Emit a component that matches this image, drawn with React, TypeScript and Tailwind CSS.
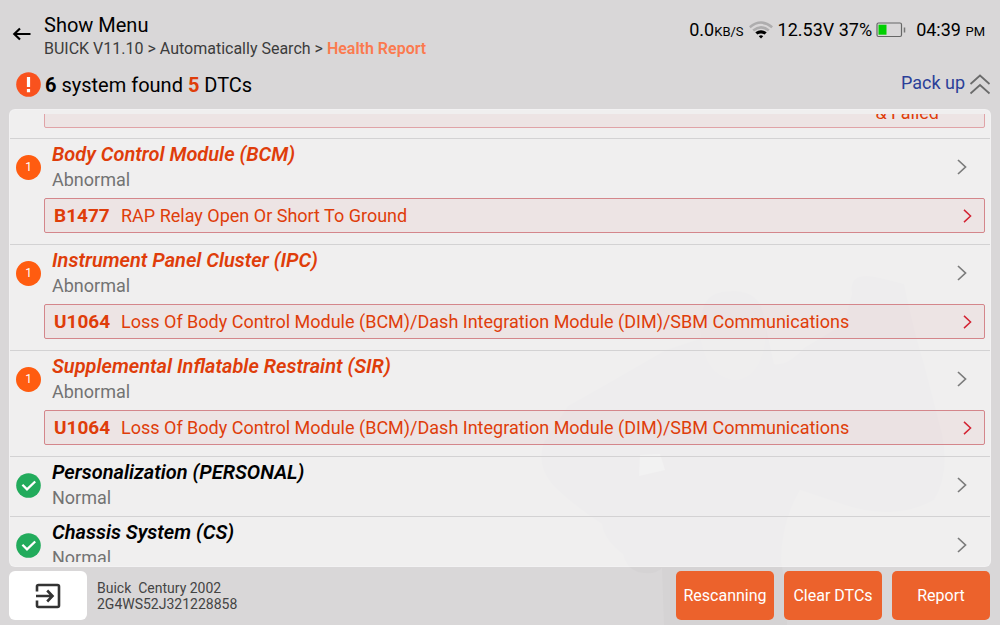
import clsx from "clsx";

type System = {
  name: string;
  dtcs: { code: string; text: string }[];
};

const systems: System[] = [
  {
    name: "Body Control Module (BCM)",
    dtcs: [{ code: "B1477", text: "RAP Relay Open Or Short To Ground" }],
  },
  {
    name: "Instrument Panel Cluster (IPC)",
    dtcs: [
      {
        code: "U1064",
        text: "Loss Of Body Control Module (BCM)/Dash Integration Module (DIM)/SBM Communications",
      },
    ],
  },
  {
    name: "Supplemental Inflatable Restraint (SIR)",
    dtcs: [
      {
        code: "U1064",
        text: "Loss Of Body Control Module (BCM)/Dash Integration Module (DIM)/SBM Communications",
      },
    ],
  },
  { name: "Personalization (PERSONAL)", dtcs: [] },
  { name: "Chassis System (CS)", dtcs: [] },
];

const actions = ["Rescanning", "Clear DTCs", "Report"];

function Chevron({ className }: { className?: string }) {
  return (
    <svg viewBox="0 0 10 16" fill="none" stroke="currentColor" className={clsx("shrink-0", className)}>
      <path d="M1 1l7.5 7L1 15" strokeWidth="1.7" />
    </svg>
  );
}

function WifiIcon() {
  return (
    <svg viewBox="0 0 24 18" fill="none" className="h-[18px] w-6">
      <path d="M.8 6.2Q12-3.2 23.2 6.2" stroke="#aeadae" strokeWidth="2.6" />
      <path d="M4.2 9.6Q12 3 19.8 9.6" stroke="#aeadae" strokeWidth="2.6" />
      <path d="M6.3 11.3Q12 7 17.7 11.3L15.7 13.6Q12 11.2 8.3 13.6z" fill="#000" />
      <path d="M9.8 15.2Q12 13.4 14.2 15.2L12 17.6z" fill="#000" />
    </svg>
  );
}

function BatteryIcon() {
  return (
    <svg viewBox="0 0 30 16" fill="none" className="h-4 w-[30px]">
      <rect x="1" y="1" width="24.5" height="13.5" rx="1.5" stroke="#666" strokeWidth="1.2" />
      <rect x="2.5" y="2.7" width="8" height="10" fill="#00d000" />
      <path d="M28.5 5.5v5" stroke="#777" strokeWidth="1.5" />
    </svg>
  );
}

function StatusIcon({ count }: { count: number }) {
  if (count > 0) {
    return (
      <span className="flex size-[25px] shrink-0 items-center justify-center rounded-full bg-[#ff5c10] text-xs text-white">
        {count}
      </span>
    );
  }
  return (
    <svg viewBox="0 0 25 25" fill="none" className="size-[25px] shrink-0">
      <circle cx="12.5" cy="12.5" r="12.3" fill="#22ab5c" />
      <path d="M6.4 11.7l4.6 4.6 8.2-7.8" stroke="#fff" strokeWidth="2.3" />
    </svg>
  );
}

function Backdrop() {
  return (
    <svg
      viewBox="0 0 1000 625"
      preserveAspectRatio="xMaxYMax slice"
      className="absolute inset-0 -z-10 size-full"
    >
      <path
        d="M664 625l-2-57q-8 8-24 4-12-4-15-18-19-14-21-30-33-22-50-40-16-20-8-42l24-36q18-10 46-26l52-30 36-12q-6-42 20-46 38-6 42 26l10 46q14 2 30-16l40-24 8-30q-4-24 28-16l24 6q10 48 20 80l18 70q8 40-8 66-40 22-92 4l-42-14q-18 30-19 70l6 40v81z"
        fill="#d5d3d4"
      />
      <path d="M640 455l20-1 5 16-26 6z" fill="#dfdedf" />
      <path d="M700 330q28-20 66-2-2 50-32 52-30-4-34-50z" fill="#d8d5d5" />
    </svg>
  );
}

function DtcRow({ code, text }: { code: string; text: string }) {
  return (
    <button className="flex h-[35px] w-full items-center rounded-xs border border-[#d4868b] bg-[#c81e2d]/5 px-[9px] text-left text-[#df3d0a]">
      <span className="flex min-w-0 flex-1 items-baseline text-lg">
        <span className="w-[67px] shrink-0 text-[19px] font-bold">{code}</span>
        <span className="truncate">{text}</span>
      </span>
      <Chevron className="mr-[3px] h-[14px] w-[9px] text-[#d32232]" />
    </button>
  );
}

function SystemRow({ system }: { system: System }) {
  const abnormal = system.dtcs.length > 0;
  return (
    <li className="shrink-0 border-t border-[#d3d2d3] pt-[3px]">
      <button className="flex w-full items-center pr-[23px] pl-[6px] text-left">
        <StatusIcon count={system.dtcs.length} />
        <span className="ml-[11px] flex-1 text-lg leading-[25px]">
          <span className={clsx("block text-xl leading-[25px] font-semibold italic", abnormal ? "text-[#df3d0a]" : "text-black")}>
            {system.name}
          </span>
          <span className="block text-[#737373]">{abnormal ? "Abnormal" : "Normal"}</span>
        </span>
        <Chevron className="h-4 w-[10px] text-[#7b7b7b]" />
      </button>
      <div className={clsx("pt-[6px] pr-[5px] pl-[34px]", abnormal && "pb-[11px]")}>
        {system.dtcs.map((dtc) => (
          <DtcRow key={dtc.code} {...dtc} />
        ))}
      </div>
    </li>
  );
}

export default function App() {
  return (
    <div className="relative isolate flex h-screen flex-col bg-[#d9d7d8] font-['Roboto',sans-serif] text-black">
      <Backdrop />

      <header className="flex shrink-0 items-start justify-between pt-[13px] pr-[15px] pl-3">
        <div className="flex items-center">
          <button aria-label="Back" className="mr-3 pb-[6px]">
            <svg viewBox="0 0 20 16" fill="none" stroke="currentColor" className="h-4 w-5">
              <path d="M18.5 8H3M8 2.5L2.3 8 8 13.5" strokeWidth="2.2" />
            </svg>
          </button>
          <div>
            <h1 className="text-xl leading-6">Show Menu</h1>
            <nav className="text-base leading-6 text-[#3c3c3c]">
              BUICK V11.10 &gt; Automatically Search &gt;{" "}
              <span className="font-semibold text-[#fb7a4f]">Health Report</span>
            </nav>
          </div>
        </div>
        <div className="flex items-center pt-[3px] text-lg">
          <span>
            0.0<span className="text-[13px]">KB/S</span>
          </span>
          <span className="mx-[5px]">
            <WifiIcon />
          </span>
          <span>12.53V 37%</span>
          <span className="mr-[10px] ml-1">
            <BatteryIcon />
          </span>
          <span>
            04:39 <span className="text-[13px]">PM</span>
          </span>
        </div>
      </header>

      <div className="flex h-12 shrink-0 items-center justify-between pr-[9px] pb-[2px] pl-4">
        <div className="flex items-center">
          <svg viewBox="0 0 25 25" className="size-[25px]">
            <circle cx="12.5" cy="12.5" r="12.3" fill="#f9521e" />
            <path d="M10.9 5h3.2v10h-3.2zM10.9 17h3.2v3.2h-3.2z" fill="#fff" />
          </svg>
          <p className="ml-1 pt-[2px] text-xl">
            <b>6</b> system found <b className="text-[#df3d0a]">5</b> DTCs
          </p>
        </div>
        <button className="flex items-center gap-1 text-lg text-[#2b3f98]">
          <span className="pb-[3px]">Pack up</span>
          <svg viewBox="0 0 22 22" fill="none" stroke="#6b6b6b" className="size-[22px]">
            <path d="M1.5 11L11 2.5 20.5 11M1.5 20.5L11 12l9.5 8.5" strokeWidth="1.7" />
          </svg>
        </button>
      </div>

      <main className="mx-[9px] flex min-h-0 flex-1 flex-col rounded-md border border-white/20 bg-white/60 py-1">
        <ul className="flex min-h-0 flex-1 flex-col overflow-hidden">
          {/* tail of the system scrolled off above */}
          <li className="flex h-6 shrink-0 flex-col justify-end overflow-hidden pr-[5px] pb-[10px] pl-[34px]">
            <div className="rounded-xs border border-[#e0a3a7] bg-[#c81e2d]/5 pr-[45px] text-right text-lg text-[#df3d0a]">
              &amp; Failed
            </div>
          </li>
          {systems.map((system) => (
            <SystemRow key={system.name} system={system} />
          ))}
        </ul>
      </main>

      <footer className="flex shrink-0 items-center pt-1 pr-[10px] pb-[5px] pl-[9px]">
        <button aria-label="Exit" className="flex h-[49px] w-[78px] items-center justify-center rounded-md bg-white">
          <svg viewBox="0 0 26 26" fill="none" stroke="#333" className="size-[26px]">
            <path d="M2 8.5V3.5Q2 2 3.5 2H22.5Q24 2 24 3.5V22.5Q24 24 22.5 24H3.5Q2 24 2 22.5V17.5" strokeWidth="2.6" />
            <path d="M1 13H17M12.2 7.5L17.5 13L12.2 18.5" strokeWidth="2.6" />
          </svg>
        </button>
        <p className="ml-[10px] flex-1 text-sm leading-4 whitespace-pre-line text-[#444]">
          Buick&nbsp; Century 2002{"\n"}2G4WS52J321228858
        </p>
        <div className="flex gap-[10px]">
          {actions.map((label) => (
            <button key={label} className="h-[49px] w-[98px] rounded-[5px] bg-[#ec622c] text-base text-white">
              {label}
            </button>
          ))}
        </div>
      </footer>
    </div>
  );
}
